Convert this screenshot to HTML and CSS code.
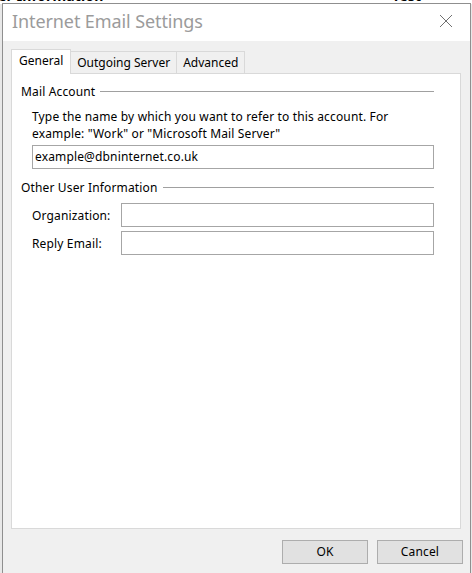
FILE: index.html
```html
<!DOCTYPE html>
<html>
<head>
<meta charset="utf-8">
<link rel="stylesheet" href="styles.css">
</head>
<body>
<div class="desktop">
  <div class="behind">
    <span class="behind-left">er Information</span>
    <span class="behind-right">Test Account</span>
  </div>
  <div class="window">
    <div class="titlebar">
      <span class="title">Internet Email Settings</span>
      <svg class="close" width="14" height="14" viewBox="0 0 14 14"><path d="M1 1 L13 13 M13 1 L1 13" stroke="#707070" stroke-width="1" fill="none"/></svg>
    </div>
    <div class="body">
      <div class="tabs">
        <div class="tab tab-active">General</div>
        <div class="tab">Outgoing Server</div>
        <div class="tab">Advanced</div>
      </div>
      <div class="panel">
        <div class="group-head"><span>Mail Account</span><div class="rule"></div></div>
        <div class="group-body">
          <p class="desc">Type the name by which you want to refer to this account. For<br>example: "Work" or "Microsoft Mail Server"</p>
          <div class="input wide">example@dbninternet.co.uk</div>
        </div>
        <div class="group-head second"><span>Other User Information</span><div class="rule"></div></div>
        <div class="group-body">
          <div class="row first-row"><span class="label">Organization:</span><div class="input field"></div></div>
          <div class="row"><span class="label">Reply Email:</span><div class="input field"></div></div>
        </div>
      </div>
      <div class="footer">
        <div class="btn">OK</div>
        <div class="btn">Cancel</div>
      </div>
    </div>
  </div>
</div>
</body>
</html>
```

FILE: styles.css
```css
html, body {
  margin: 0;
  padding: 0;
}
body {
  width: 472px;
  height: 573px;
  overflow: hidden;
  background: #f3f3f3;
  font-family: "Noto Sans", "Open Sans", sans-serif;
  font-size: 12px;
  letter-spacing: 0.15px;
  color: #000;
}
.desktop {
  position: relative;
  width: 472px;
  height: 573px;
  background: #e8e8e8;
}
.behind {
  position: absolute;
  left: 0;
  top: -13px;
  width: 472px;
  height: 17px;
  font-family: "Noto Sans", sans-serif;
  font-weight: bold;
  font-size: 14px;
  line-height: 17px;
  background: #ffffff;
}
.behind-left {
  position: absolute;
  left: -2px;
  top: 0;
}
.behind-right {
  position: absolute;
  left: 392px;
  top: 0;
}
.window {
  position: absolute;
  left: 2px;
  top: 3px;
  width: 467px;
  height: 570px;
  border: 1px solid #8f8f8f;
  border-bottom: none;
  background: #f0f0f0;
  display: flex;
  flex-direction: column;
}
.titlebar {
  height: 37px;
  background: #fff;
  display: flex;
  align-items: center;
  justify-content: space-between;
  padding: 0 17px 0 9px;
  flex: none;
}
.title {
  font-size: 18px;
  color: #9b9b9b;
  letter-spacing: -0.1px;
  margin-top: -3px;
}
.close {
  margin-top: -3px;
}
.body {
  flex: 1;
  display: flex;
  flex-direction: column;
  padding: 8px 9px 0 8px;
}
.tabs {
  display: flex;
  align-items: flex-end;
  height: 25px;
  margin-bottom: -1px;
  position: relative;
  z-index: 1;
  letter-spacing: 0;
}
.tab {
  line-height: 21px;
  padding: 0 6px;
  border: 1px solid #d9d9d9;
  margin-left: -1px;
  background: #f0f0f0;
  box-sizing: border-box;
  height: 23px;
}
.tab-active {
  margin-left: 0;
  height: 25px;
  line-height: 22px;
  background: #fff;
  border-bottom: none;
  padding: 0 7px;
}
.panel {
  flex: 1;
  background: #fff;
  border: 1px solid #d9d9d9;
  padding: 10px 26px 0 9px;
}
.group-head {
  display: flex;
  align-items: center;
  height: 16px;
  line-height: 16px;
}
.group-head .rule {
  flex: 1;
  height: 1px;
  background: #a0a0a0;
  margin-left: 5px;
  margin-top: -1px;
}
.group-head.second {
  margin-top: 11px;
}
.group-body {
  padding-left: 11px;
}
.desc {
  margin: 8px 0 0 0;
  line-height: 17px;
}
.input {
  height: 24px;
  box-sizing: border-box;
  border: 1px solid #a6a6a6;
  background: #fff;
  line-height: 22px;
  padding-left: 2px;
}
.wide {
  margin-top: 3px;
}
.row {
  display: flex;
  align-items: center;
  margin-top: 4px;
}
.row.first-row {
  margin-top: 7px;
}
.label {
  width: 89px;
  flex: none;
}
.field {
  flex: 1;
}
.footer {
  flex: none;
  display: flex;
  justify-content: flex-end;
  gap: 9px;
  padding: 11px 0 10px 0;
  margin-right: -2px;
}
.btn {
  width: 86px;
  height: 24px;
  box-sizing: border-box;
  border: 1px solid #adadad;
  background: #e1e1e1;
  text-align: center;
  line-height: 22px;
}
```
